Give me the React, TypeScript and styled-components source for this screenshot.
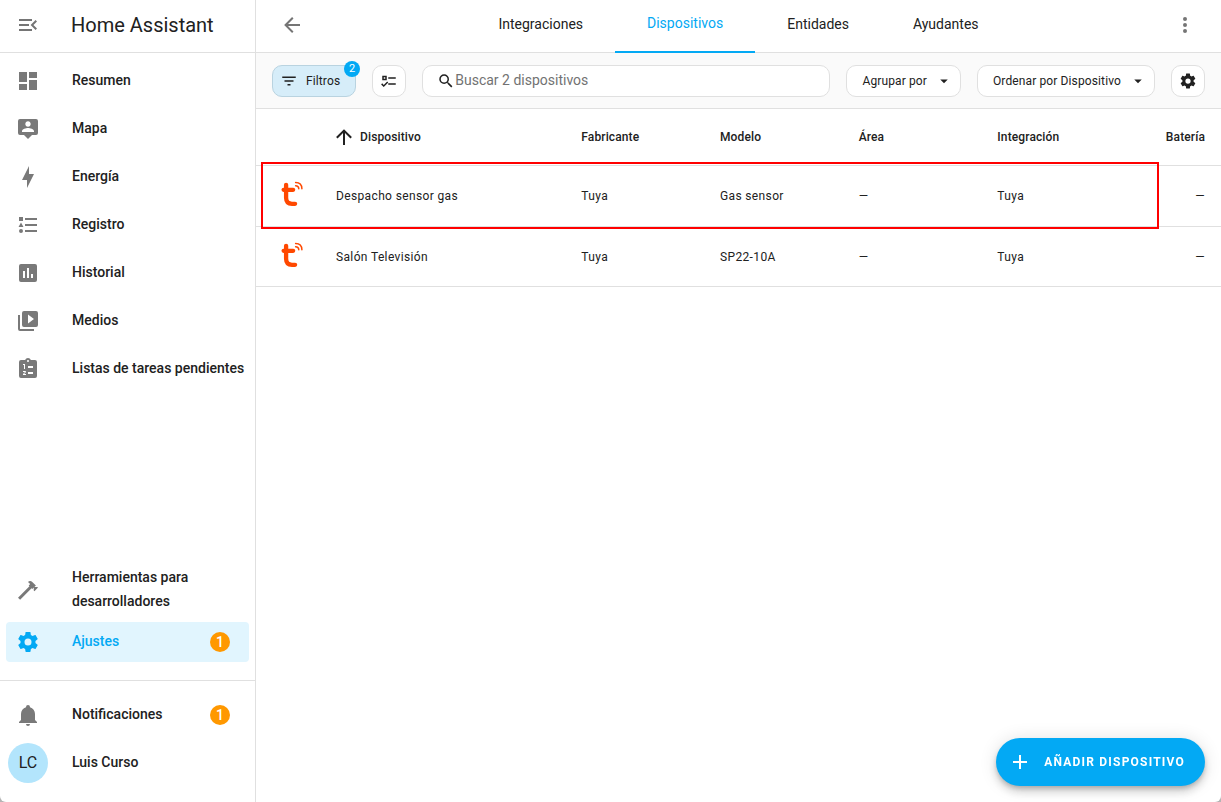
import React from 'react';
import styled, { createGlobalStyle } from 'styled-components';

const GlobalStyle = createGlobalStyle`
  *, *::before, *::after { box-sizing: border-box; }
  body {
    margin: 0;
    background: #b4b4b4;
    color: #212121;
    font-family: Roboto, "Noto Sans", sans-serif;
    font-size: 14px;
  }
  button, input { font: inherit; color: inherit; }
  a { color: inherit; text-decoration: none; }
`;

const paths = {
  menuOpen:
    'M21,15.61L19.59,17L14.58,12L19.59,7L21,8.39L17.44,12L21,15.61M3,6H16V8H3V6M3,13V11H13V13H3M3,18V16H16V18H3Z',
  dashboard: 'M13,3V9H21V3M13,21H21V11H13M3,21H11V15H3M3,13H11V3H3V13Z',
  tooltipAccount:
    'M20,2H4A2,2 0 0,0 2,4V16A2,2 0 0,0 4,18H8L12,22L16,18H20A2,2 0 0,0 22,16V4A2,2 0 0,0 20,2M12,4.3C13.5,4.3 14.7,5.5 14.7,7C14.7,8.5 13.5,9.7 12,9.7C10.5,9.7 9.3,8.5 9.3,7C9.3,5.5 10.5,4.3 12,4.3M18,15H6V14.1C6,12.1 10,11 12,11C14,11 18,12.1 18,14.1V15Z',
  bolt: 'M11 15H6L13 1V9H18L11 23V15Z',
  listType:
    'M5,9.5L7.5,14H2.5L5,9.5M3,4H7V8H3V4M5,20A2,2 0 0,0 7,18A2,2 0 0,0 5,16A2,2 0 0,0 3,18A2,2 0 0,0 5,20M9,5V7H21V5H9M9,19H21V17H9V19M9,13H21V11H9V13Z',
  chartBox:
    'M9,17H7V10H9V17M13,17H11V7H13V17M17,17H15V13H17V17M19,3H5A2,2 0 0,0 3,5V19A2,2 0 0,0 5,21H19A2,2 0 0,0 21,19V5A2,2 0 0,0 19,3Z',
  playBoxMultiple:
    'M4,6H2V20A2,2 0 0,0 4,22H18V20H4V6M20,2H8A2,2 0 0,0 6,4V16A2,2 0 0,0 8,18H20A2,2 0 0,0 22,16V4A2,2 0 0,0 20,2M12,14.5V5.5L18,10L12,14.5Z',
  clipboardList:
    'M19,3H14.82C14.4,1.84 13.3,1 12,1C10.7,1 9.6,1.84 9.18,3H5A2,2 0 0,0 3,5V19A2,2 0 0,0 5,21H19A2,2 0 0,0 21,19V5A2,2 0 0,0 19,3M12,3A1,1 0 0,1 13,4A1,1 0 0,1 12,5A1,1 0 0,1 11,4A1,1 0 0,1 12,3M7,7H9V12H8V8H7V7M10,17V18H7V17.08L9,15H7V14H9.25A0.75,0.75 0 0,1 10,14.75C10,14.95 9.92,15.14 9.79,15.27L8.12,17H10M17,17H12V15H17V17M17,11H12V9H17V11Z',
  hammer:
    'M2,19.63L13.43,8.2L12.72,7.5L14.14,6.07L12,3.89C13.2,2.7 15.09,2.7 16.27,3.89L19.87,7.5L18.45,8.91H21.29L22,9.62L18.45,13.21L17.74,12.5V9.62L16.27,11.04L15.56,10.33L4.13,21.76L2,19.63Z',
  cog: 'M12,15.5A3.5,3.5 0 0,1 8.5,12A3.5,3.5 0 0,1 12,8.5A3.5,3.5 0 0,1 15.5,12A3.5,3.5 0 0,1 12,15.5M19.43,12.97C19.47,12.65 19.5,12.33 19.5,12C19.5,11.67 19.47,11.34 19.43,11L21.54,9.37C21.73,9.22 21.78,8.95 21.66,8.73L19.66,5.27C19.54,5.05 19.27,4.96 19.05,5.05L16.56,6.05C16.04,5.66 15.5,5.32 14.87,5.07L14.5,2.42C14.46,2.18 14.25,2 14,2H10C9.75,2 9.54,2.18 9.5,2.42L9.13,5.07C8.5,5.32 7.96,5.66 7.44,6.05L4.95,5.05C4.73,4.96 4.46,5.05 4.34,5.27L2.34,8.73C2.21,8.95 2.27,9.22 2.46,9.37L4.57,11C4.53,11.34 4.5,11.67 4.5,12C4.5,12.33 4.53,12.65 4.57,12.97L2.46,14.63C2.27,14.78 2.21,15.05 2.34,15.27L4.34,18.73C4.46,18.95 4.73,19.03 4.95,18.95L7.44,17.94C7.96,18.34 8.5,18.68 9.13,18.93L9.5,21.58C9.54,21.82 9.75,22 10,22H14C14.25,22 14.46,21.82 14.5,21.58L14.87,18.93C15.5,18.67 16.04,18.34 16.56,17.94L19.05,18.95C19.27,19.03 19.54,18.95 19.66,18.73L21.66,15.27C21.78,15.05 21.73,14.78 21.54,14.63L19.43,12.97Z',
  bell: 'M21,19V20H3V19L5,17V11C5,7.9 7.03,5.17 10,4.29C10,4.19 10,4.1 10,4A2,2 0 0,1 12,2A2,2 0 0,1 14,4C14,4.1 14,4.19 14,4.29C16.97,5.17 19,7.9 19,11V17L21,19M14,21A2,2 0 0,1 12,23A2,2 0 0,1 10,21',
  arrowLeft: 'M20,11V13H8L13.5,18.5L12.08,19.92L4.16,12L12.08,4.08L13.5,5.5L8,11H20Z',
  arrowUp: 'M13,20H11V8L5.5,13.5L4.08,12.08L12,4.16L19.92,12.08L18.5,13.5L13,8V20Z',
  dots: 'M12,16A2,2 0 0,1 14,18A2,2 0 0,1 12,20A2,2 0 0,1 10,18A2,2 0 0,1 12,16M12,10A2,2 0 0,1 14,12A2,2 0 0,1 12,14A2,2 0 0,1 10,12A2,2 0 0,1 12,10M12,4A2,2 0 0,1 14,6A2,2 0 0,1 12,8A2,2 0 0,1 10,6A2,2 0 0,1 12,4Z',
  filter: 'M6,13H18V11H6M3,6V8H21V6M10,18H14V16H10V18Z',
  listChecks:
    'M3,5H9V11H3V5M5,7V9H7V7H5M11,7H21V9H11V7M11,15H21V17H11V15M5,20L1.5,16.5L2.91,15.09L5,17.17L9.59,12.59L11,14L5,20Z',
  magnify:
    'M9.5,3A6.5,6.5 0 0,1 16,9.5C16,11.11 15.41,12.59 14.44,13.73L14.71,14H15.5L20.5,19L19,20.5L14,15.5V14.71L13.73,14.44C12.59,15.41 11.11,16 9.5,16A6.5,6.5 0 0,1 3,9.5A6.5,6.5 0 0,1 9.5,3M9.5,5C7,5 5,7 5,9.5C5,12 7,14 9.5,14C12,14 14,12 14,9.5C14,7 12,5 9.5,5Z',
  menuDown: 'M7,10L12,15L17,10H7Z',
  plus: 'M19,13H13V19H11V13H5V11H11V5H13V11H19V13Z',
};

type IconName = keyof typeof paths;

const Svg = styled.svg<{ $size: number }>`
  width: ${(p) => p.$size}px;
  height: ${(p) => p.$size}px;
  flex: none;
  display: block;
  fill: currentColor;
`;

const Icon = ({ name, size = 24 }: { name: IconName; size?: number }) => (
  <Svg $size={size} viewBox="0 0 24 24" aria-hidden="true">
    <path d={paths[name]} />
  </Svg>
);

const Page = styled.div`
  display: flex;
  min-height: 100vh;
  border-radius: 0 0 6px 6px;
  background: #ffffff;
`;

/* Sidebar */

const Sidebar = styled.aside`
  width: 256px;
  flex: none;
  display: flex;
  flex-direction: column;
  border-right: 1px solid #e0e0e0;
`;

const SidebarHeader = styled.div`
  height: 53px;
  flex: none;
  display: flex;
  align-items: center;
  gap: 19px;
  padding: 0 4px 2px;
  border-bottom: 1px solid #e0e0e0;
`;

const IconButton = styled.button`
  width: 48px;
  height: 48px;
  flex: none;
  display: grid;
  place-items: center;
  padding: 0;
  border: 0;
  background: none;
  color: #757575;
  cursor: pointer;
`;

const Brand = styled.div`
  font-size: 20px;
  line-height: 24px;
`;

const NavList = styled.nav`
  flex: 1;
  display: flex;
  flex-direction: column;
  gap: 8px;
  padding: 8px 6px 18px;
`;

const Spacer = styled.div`
  flex: 1;
`;

const NavItem = styled.a<{ $active?: boolean }>`
  min-height: 40px;
  display: flex;
  align-items: center;
  padding: 0 19px 0 10px;
  border-radius: 4px;
  color: ${(p) => (p.$active ? '#03a9f4' : '#212121')};
  background: ${(p) => (p.$active ? '#e1f5fe' : 'transparent')};
  font-weight: 500;
  line-height: 24px;
`;

const NavIcon = styled.span<{ $active?: boolean }>`
  width: 56px;
  flex: none;
  color: ${(p) => (p.$active ? '#03a9f4' : '#797979')};
`;

const NavLabel = styled.span<{ $nowrap?: boolean }>`
  flex: 1;
  margin: -1px 0 1px;
  white-space: ${(p) => (p.$nowrap ? 'nowrap' : 'normal')};
`;

const CountBadge = styled.span`
  width: 20px;
  height: 20px;
  flex: none;
  border-radius: 50%;
  background: #ff9800;
  color: #ffffff;
  line-height: 20px;
  text-align: center;
`;

const AccountList = styled.div`
  display: flex;
  flex-direction: column;
  gap: 8px;
  padding: 14px 6px 19px;
  border-top: 1px solid #e0e0e0;
`;

const Avatar = styled.span`
  width: 40px;
  height: 40px;
  flex: none;
  margin: 0 24px 0 -8px;
  border-radius: 50%;
  background: #b3e5fc;
  color: #212121;
  font-size: 16px;
  font-weight: 400;
  line-height: 40px;
  text-align: center;
`;

/* Main area */

const Main = styled.main`
  flex: 1;
  min-width: 0;
`;

const TopBar = styled.header`
  height: 53px;
  display: flex;
  align-items: stretch;
  padding: 0 12px;
  border-bottom: 1px solid #e0e0e0;

  & > button {
    height: 50px;
  }
`;

const Tabs = styled.nav`
  flex: 1;
  display: flex;
  justify-content: center;
`;

const Tab = styled.a<{ $active?: boolean }>`
  height: 53px;
  display: flex;
  align-items: center;
  padding: 0 32px 6px;
  line-height: 20px;
  color: ${(p) => (p.$active ? '#03a9f4' : '#212121')};
  border-bottom: ${(p) => (p.$active ? '2px solid #03a9f4' : '0')};
`;

const Toolbar = styled.div`
  height: 56px;
  display: flex;
  align-items: center;
  gap: 16px;
  padding: 0 16px;
  background: #fafafa;
  border-bottom: 1px solid #e0e0e0;
`;

const Chip = styled.button<{ $active?: boolean }>`
  position: relative;
  height: 32px;
  min-width: 34px;
  flex: none;
  display: flex;
  align-items: center;
  justify-content: center;
  gap: 8px;
  padding: 0 7px;
  border: 1px solid ${(p) => (p.$active ? '#b9d3e0' : '#e0e0e0')};
  border-radius: 10px;
  background: ${(p) => (p.$active ? '#d6edf9' : '#ffffff')};
  font-size: 12px;
  font-weight: 400;
  letter-spacing: 0.01em;
  line-height: 16px;
  cursor: pointer;
`;

const FilterChip = styled(Chip)`
  padding: 0 15px 0 7px;
`;

const MenuChip = styled(Chip)`
  padding: 0 7px 0 15px;
`;

const FilterCount = styled.span`
  position: absolute;
  top: -5px;
  right: -5px;
  width: 16px;
  height: 16px;
  border-radius: 50%;
  background: #03a9f4;
  color: #ffffff;
  font-size: 11px;
  font-weight: 400;
  line-height: 16px;
  text-align: center;
`;

const SearchBox = styled.label`
  height: 32px;
  flex: 1;
  min-width: 0;
  display: flex;
  align-items: center;
  padding: 0 14px;
  border: 1px solid #e0e0e0;
  border-radius: 10px;
  background: #ffffff;
`;

const SearchInput = styled.input`
  flex: 1;
  min-width: 0;
  height: 28px;
  padding: 0 0 2px;
  border: 0;
  outline: 0;
  background: none;

  &::placeholder {
    color: #727272;
    opacity: 1;
  }
`;

/* Device table */

const Table = styled.table`
  display: block;
  width: 100%;
  font-size: 12px;
  line-height: 20px;

  thead, tbody { display: block; }
`;

const Row = styled.tr<{ $height: number }>`
  position: relative;
  height: ${(p) => p.$height}px;
  display: grid;
  grid-template-columns: 64px minmax(0, 23fr) repeat(4, minmax(0, 13fr)) 101px;
  align-items: center;

  tbody & { border-top: 1px solid #e0e0e0; }
  tbody &:last-child { border-bottom: 1px solid #e0e0e0; }
`;

const HeadCell = styled.th<{ $end?: boolean }>`
  padding: 0 16px;
  font-weight: 500;
  letter-spacing: 0.01em;
  text-align: ${(p) => (p.$end ? 'right' : 'left')};
`;

const SortLabel = styled.span`
  display: flex;
  align-items: center;
  gap: 4px;
  margin-left: -4px;
`;

const Cell = styled.td<{ $end?: boolean }>`
  padding: 0 16px;
  letter-spacing: 0.03em;
  text-align: ${(p) => (p.$end ? 'right' : 'left')};
`;

const LogoCell = styled.td`
  padding: 0 0 4px 24px;
`;

const Logo = styled.svg`
  display: block;
  width: 24px;
  height: 26px;
`;

const Highlight = styled.span`
  position: absolute;
  z-index: 1;
  inset: -4px 62px -3px 5px;
  border: 2px solid #ff0000;
  pointer-events: none;
`;

const AddButton = styled.button`
  position: fixed;
  right: 16px;
  bottom: 16px;
  height: 48px;
  display: flex;
  align-items: center;
  gap: 12px;
  padding: 0 20px 0 12px;
  border: 0;
  border-radius: 24px;
  background: #03a9f4;
  color: #ffffff;
  font-size: 12px;
  font-weight: 700;
  letter-spacing: 0.1em;
  text-transform: uppercase;
  box-shadow: 0 3px 5px -1px rgba(0, 0, 0, 0.2), 0 6px 10px 0 rgba(0, 0, 0, 0.14),
    0 1px 18px 0 rgba(0, 0, 0, 0.12);
  cursor: pointer;
`;

const TuyaLogo = () => (
  <Logo viewBox="0 0 24 26" fill="none" stroke="#ff4800" strokeLinecap="round" role="img" aria-label="Tuya">
    <path d="M3.6 8.8H13.2" strokeWidth="4.2" />
    <path d="M6.1 3.8V16.8C6.1 20.8 8.2 22.8 12 22.8H15.1" strokeWidth="4.3" />
    <path d="M15.6 4.8C17.6 4.8 18.7 6 18.8 7.8" strokeWidth="1.5" />
    <path d="M15.6 1.6C19.4 1.6 21.8 4 21.9 7.8" strokeWidth="1.5" />
  </Logo>
);

const navItems: { icon: IconName; label: string }[] = [
  { icon: 'dashboard', label: 'Resumen' },
  { icon: 'tooltipAccount', label: 'Mapa' },
  { icon: 'bolt', label: 'Energía' },
  { icon: 'listType', label: 'Registro' },
  { icon: 'chartBox', label: 'Historial' },
  { icon: 'playBoxMultiple', label: 'Medios' },
  { icon: 'clipboardList', label: 'Listas de tareas pendientes' },
];

const tabs = ['Integraciones', 'Dispositivos', 'Entidades', 'Ayudantes'];

const devices = [
  { name: 'Despacho sensor gas', maker: 'Tuya', model: 'Gas sensor', integration: 'Tuya', highlighted: true },
  { name: 'Salón Televisión', maker: 'Tuya', model: 'SP22-10A', integration: 'Tuya', highlighted: false },
];

const AppSidebar = () => (
  <Sidebar>
    <SidebarHeader>
      <IconButton type="button" aria-label="Contraer barra lateral">
        <Icon name="menuOpen" />
      </IconButton>
      <Brand>Home Assistant</Brand>
    </SidebarHeader>
    <NavList>
      {navItems.map((item) => (
        <NavItem key={item.label} href="#">
          <NavIcon>
            <Icon name={item.icon} />
          </NavIcon>
          <NavLabel $nowrap>{item.label}</NavLabel>
        </NavItem>
      ))}
      <Spacer />
      <NavItem href="#">
        <NavIcon>
          <Icon name="hammer" />
        </NavIcon>
        <NavLabel>Herramientas para desarrolladores</NavLabel>
      </NavItem>
      <NavItem href="#" $active aria-current="page">
        <NavIcon $active>
          <Icon name="cog" />
        </NavIcon>
        <NavLabel>Ajustes</NavLabel>
        <CountBadge>1</CountBadge>
      </NavItem>
    </NavList>
    <AccountList>
      <NavItem href="#">
        <NavIcon>
          <Icon name="bell" />
        </NavIcon>
        <NavLabel>Notificaciones</NavLabel>
        <CountBadge>1</CountBadge>
      </NavItem>
      <NavItem href="#">
        <Avatar>LC</Avatar>
        <NavLabel>Luis Curso</NavLabel>
      </NavItem>
    </AccountList>
  </Sidebar>
);

const DeviceToolbar = () => (
  <Toolbar>
    <FilterChip type="button" $active>
      <Icon name="filter" size={18} />
      Filtros
      <FilterCount>2</FilterCount>
    </FilterChip>
    <Chip type="button" aria-label="Seleccionar">
      <Icon name="listChecks" size={18} />
    </Chip>
    <SearchBox>
      <Icon name="magnify" size={18} />
      <SearchInput type="text" aria-label="Buscar dispositivos" placeholder="Buscar 2 dispositivos" />
    </SearchBox>
    <MenuChip type="button">
      Agrupar por
      <Icon name="menuDown" size={18} />
    </MenuChip>
    <MenuChip type="button">
      Ordenar por Dispositivo
      <Icon name="menuDown" size={18} />
    </MenuChip>
    <Chip type="button" aria-label="Configurar tabla">
      <Icon name="cog" size={18} />
    </Chip>
  </Toolbar>
);

const DeviceTable = () => (
  <Table>
    <thead>
      <Row $height={56}>
        <HeadCell aria-label="Icono" />
        <HeadCell aria-sort="ascending">
          <SortLabel>
            <Icon name="arrowUp" />
            Dispositivo
          </SortLabel>
        </HeadCell>
        <HeadCell>Fabricante</HeadCell>
        <HeadCell>Modelo</HeadCell>
        <HeadCell>Área</HeadCell>
        <HeadCell>Integración</HeadCell>
        <HeadCell $end>Batería</HeadCell>
      </Row>
    </thead>
    <tbody>
      {devices.map((d) => (
        <Row key={d.name} $height={61}>
          <LogoCell>
            <TuyaLogo />
            {d.highlighted && <Highlight />}
          </LogoCell>
          <Cell>{d.name}</Cell>
          <Cell>{d.maker}</Cell>
          <Cell>{d.model}</Cell>
          <Cell>—</Cell>
          <Cell>{d.integration}</Cell>
          <Cell $end>—</Cell>
        </Row>
      ))}
    </tbody>
  </Table>
);

export default function App() {
  return (
    <>
      <GlobalStyle />
      <Page>
        <AppSidebar />
        <Main>
          <TopBar>
            <IconButton type="button" aria-label="Atrás">
              <Icon name="arrowLeft" />
            </IconButton>
            <Tabs>
              {tabs.map((tab) => (
                <Tab key={tab} href="#" $active={tab === 'Dispositivos'}>
                  {tab}
                </Tab>
              ))}
            </Tabs>
            <IconButton type="button" aria-label="Más opciones">
              <Icon name="dots" />
            </IconButton>
          </TopBar>
          <DeviceToolbar />
          <DeviceTable />
        </Main>
      </Page>
      <AddButton type="button">
        <Icon name="plus" />
        Añadir dispositivo
      </AddButton>
    </>
  );
}
